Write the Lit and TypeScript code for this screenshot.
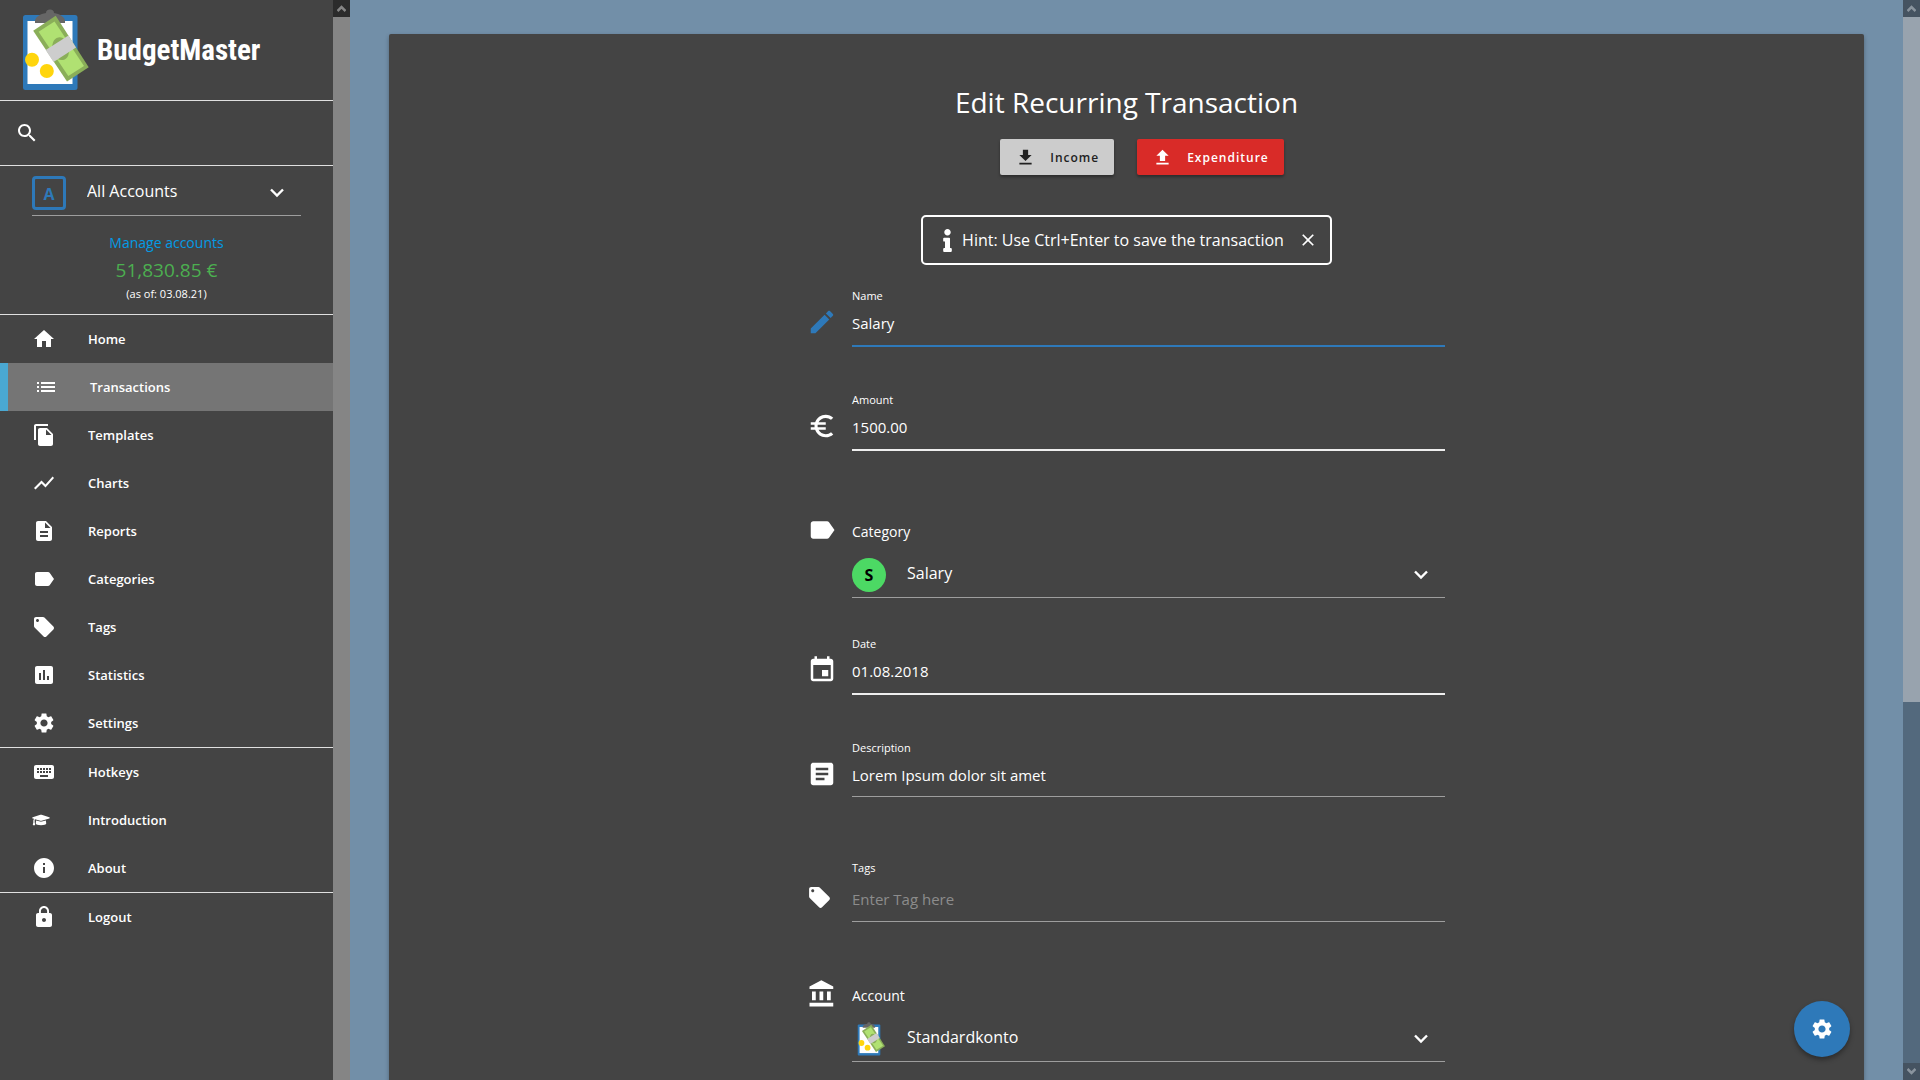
import { LitElement, html, svg, css } from "lit";
import { customElement, property, state } from "lit/decorators.js";
import { classMap } from "lit/directives/class-map.js";

const ICONS: Record<string, string> = {
  home: "M10 20v-6h4v6h5v-8h3L12 3 2 12h3v8z",
  list: "M3 13h2v-2H3v2zm0 4h2v-2H3v2zm0-8h2V7H3v2zm4 4h14v-2H7v2zm0 4h14v-2H7v2zM7 7v2h14V7H7z",
  copy: "M16 1H4c-1.1 0-2 .9-2 2v14h2V3h12V1zm-1 4l6 6v10c0 1.1-.9 2-2 2H7.99C6.89 23 6 22.1 6 21l.01-14c0-1.1.89-2 1.99-2h7zm-1 7h5.5L14 6.5V12z",
  chart: "M3.5 18.49l6-6.01 4 4L22 6.92l-1.41-1.41-7.09 7.97-4-4L2 16.99z",
  report: "M14 2H6c-1.1 0-1.99.9-1.99 2L4 20c0 1.1.89 2 1.99 2H18c1.1 0 2-.9 2-2V8l-6-6zm2 16H8v-2h8v2zm0-4H8v-2h8v2zm-3-5V3.5L18.5 9H13z",
  label: "M17.63 5.84C17.27 5.33 16.67 5 16 5L5 5.01C3.9 5.01 3 5.9 3 7v10c0 1.1.9 1.99 2 1.99L16 19c.67 0 1.27-.33 1.63-.84L22 12l-4.37-6.16z",
  tag: "M21.41 11.58l-9-9C12.05 2.22 11.55 2 11 2H4c-1.1 0-2 .9-2 2v7c0 .55.22 1.05.59 1.42l9 9c.36.36.86.58 1.41.58.55 0 1.05-.22 1.41-.59l7-7c.37-.36.59-.86.59-1.41 0-.55-.23-1.06-.59-1.42zM5.5 7C4.67 7 4 6.33 4 5.5S4.67 4 5.5 4 7 4.67 7 5.5 6.33 7 5.5 7z",
  stats: "M19 3H5c-1.1 0-2 .9-2 2v14c0 1.1.9 2 2 2h14c1.1 0 2-.9 2-2V5c0-1.1-.9-2-2-2zM9 17H7v-7h2v7zm4 0h-2V7h2v10zm4 0h-2v-4h2v4z",
  settings: "M19.14 12.94c.04-.3.06-.61.06-.94 0-.32-.02-.64-.07-.94l2.03-1.58c.18-.14.23-.41.12-.61l-1.92-3.32c-.12-.22-.37-.29-.59-.22l-2.39.96c-.5-.38-1.03-.7-1.62-.94l-.36-2.54c-.04-.24-.24-.41-.48-.41h-3.84c-.24 0-.43.17-.47.41l-.36 2.54c-.59.24-1.13.57-1.62.94l-2.39-.96c-.22-.08-.47 0-.59.22L2.74 8.87c-.12.21-.08.47.12.61l2.03 1.58c-.05.3-.09.63-.09.94s.02.64.07.94l-2.03 1.58c-.18.14-.23.41-.12.61l1.92 3.32c.12.22.37.29.59.22l2.39-.96c.5.38 1.03.7 1.62.94l.36 2.54c.05.24.24.41.48.41h3.84c.24 0 .44-.17.47-.41l.36-2.54c.59-.24 1.13-.56 1.62-.94l2.39.96c.22.08.47 0 .59-.22l1.92-3.32c.12-.22.07-.47-.12-.61l-2.01-1.58zM12 15.6c-1.98 0-3.6-1.62-3.6-3.6s1.62-3.6 3.6-3.6 3.6 1.62 3.6 3.6-1.62 3.6-3.6 3.6z",
  keyboard: "M20 5H4c-1.1 0-1.99.9-1.99 2L2 17c0 1.1.9 2 2 2h16c1.1 0 2-.9 2-2V7c0-1.1-.9-2-2-2zm-9 3h2v2h-2V8zm0 3h2v2h-2v-2zM8 8h2v2H8V8zm0 3h2v2H8v-2zm-1 2H5v-2h2v2zm0-3H5V8h2v2zm9 7H8v-2h8v2zm0-4h-2v-2h2v2zm0-3h-2V8h2v2zm3 3h-2v-2h2v2zm0-3h-2V8h2v2z",
  info: "M12 2C6.48 2 2 6.48 2 12s4.48 10 10 10 10-4.48 10-10S17.52 2 12 2zm1 15h-2v-6h2v6zm0-8h-2V7h2v2z",
  lock: "M18 8h-1V6c0-2.76-2.24-5-5-5S7 3.24 7 6v2H6c-1.1 0-2 .9-2 2v10c0 1.1.9 2 2 2h12c1.1 0 2-.9 2-2V10c0-1.1-.9-2-2-2zm-6 9c-1.1 0-2-.9-2-2s.9-2 2-2 2 .9 2 2-.9 2-2 2zm3.1-9H8.9V6c0-1.71 1.39-3.1 3.1-3.1 1.71 0 3.1 1.39 3.1 3.1v2z",
  search: "M15.5 14h-.79l-.28-.27C15.41 12.59 16 11.11 16 9.5 16 5.91 13.09 3 9.5 3S3 5.91 3 9.5 5.91 16 9.5 16c1.61 0 3.09-.59 4.23-1.57l.27.28v.79l5 4.99L20.49 19l-4.99-5zm-6 0C7.01 14 5 11.99 5 9.5S7.01 5 9.5 5 14 7.01 14 9.5 11.99 14 9.5 14z",
  edit: "M3 17.25V21h3.75L17.81 9.94l-3.75-3.75L3 17.25zM20.71 7.04c.39-.39.39-1.02 0-1.41l-2.34-2.34c-.39-.39-1.02-.39-1.41 0l-1.83 1.83 3.75 3.75 1.83-1.83z",
  euro: "M15 18.5c-2.51 0-4.68-1.42-5.76-3.5H15v-2H8.58c-.05-.33-.08-.66-.08-1s.03-.67.08-1H15V9H9.24C10.32 6.92 12.5 5.5 15 5.5c1.61 0 3.09.59 4.23 1.57L21 5.3C19.41 3.87 17.3 3 15 3c-3.92 0-7.24 2.51-8.48 6H3v2h3.06c-.04.33-.06.66-.06 1s.02.67.06 1H3v2h3.52c1.24 3.49 4.56 6 8.48 6 2.31 0 4.41-.87 6-2.3l-1.78-1.77c-1.13.98-2.6 1.57-4.22 1.57z",
  event: "M17 12h-5v5h5v-5zM16 1v2H8V1H6v2H5c-1.11 0-1.99.9-1.99 2L3 19c0 1.1.89 2 2 2h14c1.1 0 2-.9 2-2V5c0-1.1-.9-2-2-2h-1V1h-2zm3 18H5V8h14v11z",
  article: "M19 3H5c-1.1 0-2 .9-2 2v14c0 1.1.9 2 2 2h14c1.1 0 2-.9 2-2V5c0-1.1-.9-2-2-2zm-5 14H7v-2h7v2zm3-4H7v-2h10v2zm0-4H7V7h10v2z",
  bank: "M4 10v7h3v-7H4zm6 0v7h3v-7h-3zM2 22h19v-3H2v3zm14-12v7h3v-7h-3zm-4.5-9L2 6v2h19V6l-9.5-5z",
  close: "M19 6.41L17.59 5 12 10.59 6.41 5 5 6.41 10.59 12 5 17.59 6.41 19 12 13.41 17.59 19 19 17.59 13.41 12z",
  download: "M19 9h-4V3H9v6H5l7 7 7-7zM5 18v2h14v-2H5z",
  upload: "M9 16h6v-6h4l-7-7-7 7h4zm-4 2h14v2H5z",
  hint: "M20 424.229h20V279.771H20c-11.046 0-20-8.954-20-20V212c0-11.046 8.954-20 20-20h112c11.046 0 20 8.954 20 20v212.229h20c11.046 0 20 8.954 20 20V492c0 11.046-8.954 20-20 20H20c-11.046 0-20-8.954-20-20v-47.771c0-11.046 8.954-20 20-20zM96 0C56.235 0 24 32.235 24 72s32.235 72 72 72 72-32.235 72-72S135.764 0 96 0z",
  graduation: "M622.34 153.2L343.4 67.5c-15.2-4.67-31.6-4.67-46.79 0L17.66 153.2c-23.54 7.23-23.54 38.36 0 45.59l48.63 14.94c-10.67 13.19-17.23 29.28-17.88 46.9C38.78 266.15 32 276.11 32 288c0 10.78 5.68 19.85 13.86 25.65L20.33 428.53C18.11 438.52 25.71 448 35.94 448h56.11c10.24 0 17.84-9.48 15.62-19.47L82.14 313.65C90.32 307.85 96 298.78 96 288c0-11.57-6.47-21.25-15.66-26.87.76-15.02 8.44-28.3 20.69-36.72L296.6 284.5c9.06 2.78 26.44 6.25 46.79 0l278.95-85.7c23.55-7.24 23.55-38.36 0-45.6zM352.79 315.09c-28.53 8.76-52.84 3.92-65.59 0l-145.02-44.55L128 384c0 35.35 85.96 64 192 64s192-28.65 192-64l-14.18-113.47-145.03 44.56z",
};

const VIEW_BOXES: Record<string, string> = {
  hint: "0 0 192 512",
  graduation: "0 0 640 512",
};

const icon = (name: string, cls = "") => html`
  <svg class="icon ${cls}" viewBox=${VIEW_BOXES[name] ?? "0 0 24 24"} aria-hidden="true">
    ${svg`<path d=${ICONS[name]}></path>`}
  </svg>`;

const chevron = () => html`
  <svg class="chevron" viewBox="0 0 16 10" aria-hidden="true">
    ${svg`<path d="M2 1.5 8 7.5 14 1.5" fill="none" stroke="currentColor" stroke-width="2.4"></path>`}
  </svg>`;

/* Clipboard with a banded bank note and two coins. */
const logo = (cls: string) => html`
  <svg class=${cls} viewBox="20 9 70 82" aria-hidden="true">
    ${svg`
      <rect x="23" y="15" width="54.5" height="75" rx="2.5" fill="#2e79b9"></rect>
      <rect x="27.5" y="21" width="45" height="63" fill="#fff"></rect>
      <path d="M35 23v-2.5c1-4 5-6.5 11-7.5a4 3.5 0 0 1 8 0c6 1 10 3.5 11 7.5V23z" fill="#666"></path>
      <path d="M55.7 15.8 88.7 67.3 67 81.5 33.2 30.7z" fill="#8aae59"></path>
      <path d="M54.5 21.5 84 66 68.3 76 38.6 31.8z" fill="#b0e172"></path>
      <ellipse cx="60.7" cy="48.7" rx="8.5" ry="11.5" transform="rotate(-12 60.7 48.7)" fill="#8aae59"></ellipse>
      <path d="M45.7 50 68.5 35.5 76 47.5 53.5 62z" fill="#cdcdcd"></path>
      <circle cx="32" cy="59.7" r="7" fill="#ffd50d"></circle>
      <circle cx="46.8" cy="71" r="7" fill="#ffd50d"></circle>
    `}
  </svg>`;

const shared = css`
  * { box-sizing: border-box; }
  .icon { width: 24px; height: 24px; flex: none; fill: currentColor; display: block; }
  .chevron { width: 16px; height: 10px; flex: none; display: block; pointer-events: none; }
  a { color: inherit; text-decoration: none; }
  input, select, button { font: inherit; color: inherit; background: none; border: 0; border-radius: 0; outline: 0; padding: 0; margin: 0; min-width: 0; }
  select { appearance: none; flex: 1; height: 100%; padding-bottom: 4px; }
  option { background: #444; }
`;

@customElement("scroll-rail")
class ScrollRail extends LitElement {
  @property() thumb = "full";
  static styles = css`
    :host { display: flex; flex-direction: column; width: 17px; flex: none; background: var(--track); }
    .step { height: 17px; display: grid; place-items: center; background: var(--step); color: var(--arrow); }
    .step svg { width: 9px; height: 7px; display: block; }
    .run { flex: 1; display: flex; flex-direction: column; }
    .thumb { background: var(--thumb); flex: 1; }
    .rest { flex: none; }
    .partial .thumb { flex: 655; }
    .partial .rest { flex: 345; }
  `;
  render() {
    const partial = this.thumb === "partial";
    const arrow = (d: string) => html`<div class="step"><svg viewBox="0 0 9 7">
      ${svg`<path d=${d} fill="none" stroke="currentColor" stroke-width="2.5"></path>`}</svg></div>`;
    return html`
      ${arrow("M.5 6 4.5 2 8.5 6")}
      <div class=${classMap({ run: true, partial })}>
        <div class="thumb"></div><div class="rest"></div>
      </div>
      ${partial ? arrow("M.5 1 4.5 5 8.5 1") : ""}`;
  }
}

interface NavItem { icon: string; text: string; }

@customElement("side-nav")
class SideNav extends LitElement {
  @state() active = "Transactions";
  groups: NavItem[][] = [
    [
      { icon: "home", text: "Home" },
      { icon: "list", text: "Transactions" },
      { icon: "copy", text: "Templates" },
      { icon: "chart", text: "Charts" },
      { icon: "report", text: "Reports" },
      { icon: "label", text: "Categories" },
      { icon: "tag", text: "Tags" },
      { icon: "stats", text: "Statistics" },
      { icon: "settings", text: "Settings" },
    ],
    [
      { icon: "keyboard", text: "Hotkeys" },
      { icon: "graduation", text: "Introduction" },
      { icon: "info", text: "About" },
    ],
    [{ icon: "lock", text: "Logout" }],
  ];
  static styles = [shared, css`
    :host { display: block; width: 333px; flex: none; background: #444; overflow: hidden; }
    .brand { display: flex; align-items: center; gap: 7px; height: 100px; padding-left: 20px; }
    .brand-logo { width: 70px; height: 82px; }
    .brand-name { font: bold 29px/40px "Roboto Condensed", "Open Sans Condensed", "Liberation Sans Narrow", "Liberation Sans", sans-serif; }
    .search { display: flex; align-items: center; gap: 16px; height: 65px; padding: 0 15px; border-top: 1px solid #e0e0e0; }
    .search input { flex: 1; height: 40px; }
    .account { border-top: 1px solid #e0e0e0; padding: 5px 32px 11px; text-align: center; }
    .picker { display: flex; align-items: center; height: 45px; border-bottom: 1px solid #9e9e9e; font-size: 16px; padding-right: 16px; gap: 21px; }
    .badge { width: 34px; height: 34px; border: 3px solid #2e79b9; border-radius: 4px; color: #2e79b9; font: bold 16px/30px "Open Sans", sans-serif; }
    .manage { display: block; color: #039be5; font-size: 14px; line-height: 24px; margin-top: 15px; }
    .balance { color: #4caf50; font-size: 19px; line-height: 30px; }
    .as-of { font-size: 11px; line-height: 18px; }
    ul { list-style: none; margin: 0; padding: 0; border-top: 1px solid #e0e0e0; }
    .item { display: flex; align-items: center; gap: 32px; height: 48px; padding-left: 32px; font-size: 13px; font-weight: 600; }
    .active { background: #757575; border-left: 8px solid #4aa8d2; padding-left: 26px; }
    .graduation { width: 18px; height: 14px; margin-right: 6px; }
  `];
  render() {
    return html`
      <div class="brand">${logo("brand-logo")}<span class="brand-name">BudgetMaster</span></div>
      <div class="search">
        <label for="q" aria-label="Search">${icon("search")}</label><input id="q" type="search" />
      </div>
      <div class="account">
        <div class="picker">
          <span class="badge">A</span>
          <select aria-label="Account filter"><option>All Accounts</option></select>
          ${chevron()}
        </div>
        <a class="manage" href="#accounts">Manage accounts</a>
        <div class="balance">51,830.85 €</div>
        <div class="as-of">(as of: 03.08.21)</div>
      </div>
      <nav>
        ${this.groups.map((group) => html`<ul>${group.map((item) => html`
          <li><a class=${classMap({ item: true, active: item.text === this.active })} href="#${item.text.toLowerCase()}"
            >${icon(item.icon, item.icon)}<span>${item.text}</span></a></li>`)}</ul>`)}
      </nav>`;
  }
}

@customElement("transaction-form")
class TransactionForm extends LitElement {
  @state() hintVisible = true;
  static styles = [shared, css`
    :host { display: block; }
    form { display: flex; flex-direction: column; align-items: center; padding-top: 44px; }
    h1 { margin: 0; font-size: 28px; line-height: 48px; font-weight: 400; }
    .kinds { display: flex; gap: 23px; margin: 13px 0 40px 31px; }
    .kind { display: flex; align-items: center; gap: 14px; height: 36px; padding: 0 15px; border-radius: 2px; background: #ccc; color: #212121;
      font-size: 12px; font-weight: 600; letter-spacing: 1px; box-shadow: 0 2px 3px rgba(0, 0, 0, .35); }
    .kind .icon { width: 21px; height: 21px; }
    .expense { background: #d92b28; color: #fff; }
    .hint { display: flex; align-items: center; height: 50px; border: 2px solid #fff; border-radius: 5px; padding: 0 12px 0 20px; font-size: 16px; gap: 10px; }
    .hint .hint-icon { width: 9px; height: 23px; }
    .hint button { padding-left: 4px; }
    .hint button .icon { width: 20px; height: 20px; }
    .fields { width: 100%; max-width: 637px; padding-top: 21px; }
    .field { display: grid; grid-template-columns: 44px minmax(0, 1fr); margin-bottom: 43px; }
    .field > .icon { grid-row: 1 / 3; width: 30px; height: 30px; margin: 21px 0 0 -1px; }
    .field label { font-size: 11px; line-height: 20px; }
    .field input { height: 41px; padding-bottom: 6px; border-bottom: 2px solid #eee; font-size: 15px; }
    .field .edit { color: #2e79b9; }
    .field .focused { border-bottom-color: #2e79b9; }
    .field .thin { height: 39px; padding-bottom: 4px; border-bottom: 1px solid #9e9e9e; }
    .field .tall { height: 44px; padding-bottom: 2px; border-bottom: 1px solid #9e9e9e; }
    .field ::placeholder { color: #8c8c8c; opacity: 1; }
    .field .tag { width: 25px; height: 25px; margin-top: 27px; }
    .spaced { margin-top: 71px; margin-bottom: 36px; }
    .loose { margin-bottom: 61px; }
    .looser { margin-bottom: 64px; }
    .choice label { font-size: 14px; }
    .choice > .icon { margin-top: -7px; }
    .picker { grid-column: 2; display: flex; align-items: center; gap: 21px; height: 46px; margin-top: 10px; border-bottom: 1px solid #9e9e9e; font-size: 16px; padding-right: 16px; }
    .circle { width: 34px; height: 34px; border-radius: 50%; background: #4cd964; color: #000; text-align: center; font: bold 16px/34px "Open Sans", sans-serif; }
    .account-logo { width: 34px; height: 34px; padding-left: 4px; }
  `];
  render() {
    return html`
      <form @submit=${(e: Event) => e.preventDefault()}>
        <h1>Edit Recurring Transaction</h1>
        <div class="kinds">
          <button class="kind" type="button">${icon("download")}Income</button>
          <button class="kind expense" type="button">${icon("upload")}Expenditure</button>
        </div>
        ${this.hintVisible ? html`<div class="hint">
          ${icon("hint", "hint-icon")}<span>Hint: Use Ctrl+Enter to save the transaction</span>
          <button type="button" aria-label="Dismiss hint" @click=${() => (this.hintVisible = false)}>${icon("close")}</button>
        </div>` : ""}
        <div class="fields">
          <div class="field">${icon("edit", "edit")}<label for="name">Name</label>
            <input id="name" class="focused" .value=${"Salary"} /></div>
          <div class="field">${icon("euro")}<label for="amount">Amount</label>
            <input id="amount" .value=${"1500.00"} /></div>
          <div class="field choice spaced">${icon("label")}<label for="category">Category</label>
            <div class="picker"><span class="circle">S</span>
              <select id="category"><option>Salary</option></select>${chevron()}</div></div>
          <div class="field">${icon("event")}<label for="date">Date</label>
            <input id="date" .value=${"01.08.2018"} /></div>
          <div class="field loose">${icon("article")}<label for="description">Description</label>
            <input id="description" class="thin" .value=${"Lorem Ipsum dolor sit amet"} /></div>
          <div class="field looser">${icon("tag", "tag")}<label for="tags">Tags</label>
            <input id="tags" class="tall" placeholder="Enter Tag here" /></div>
          <div class="field choice">${icon("bank")}<label for="account">Account</label>
            <div class="picker">${logo("account-logo")}
              <select id="account"><option>Standardkonto</option></select>${chevron()}</div></div>
        </div>
      </form>`;
  }
}

@customElement("app-root")
class AppRoot extends LitElement {
  static styles = [shared, css`
    :host { display: flex; height: 100vh; overflow: hidden; background: #728fa8; color: #fff;
      font-family: "Open Sans", "Noto Sans", sans-serif; font-size: 15px; }
    .side-rail { --track: #444; --thumb: #858585; --step: #2b2b2b; --arrow: #858585; }
    .page-rail { --track: #53697d; --thumb: #98a3ae; --step: #455361; --arrow: #8a949e; }
    main { flex: 1; min-width: 0; padding: 34px 39px 0; overflow: hidden; }
    .card { min-height: 100%; background: #444; border-radius: 2px; box-shadow: 0 2px 4px rgba(0, 0, 0, .3); }
    .fab { position: fixed; right: 70px; bottom: 23px; width: 56px; height: 56px; border-radius: 50%; background: #2e79b9; color: #fff;
      display: grid; place-items: center; box-shadow: 0 3px 5px rgba(0, 0, 0, .35); }
  `];
  render() {
    return html`
      <side-nav></side-nav>
      <scroll-rail class="side-rail"></scroll-rail>
      <main><div class="card"><transaction-form></transaction-form></div></main>
      <scroll-rail class="page-rail" thumb="partial"></scroll-rail>
      <button class="fab" type="button" aria-label="Options">${icon("settings")}</button>`;
  }
}
